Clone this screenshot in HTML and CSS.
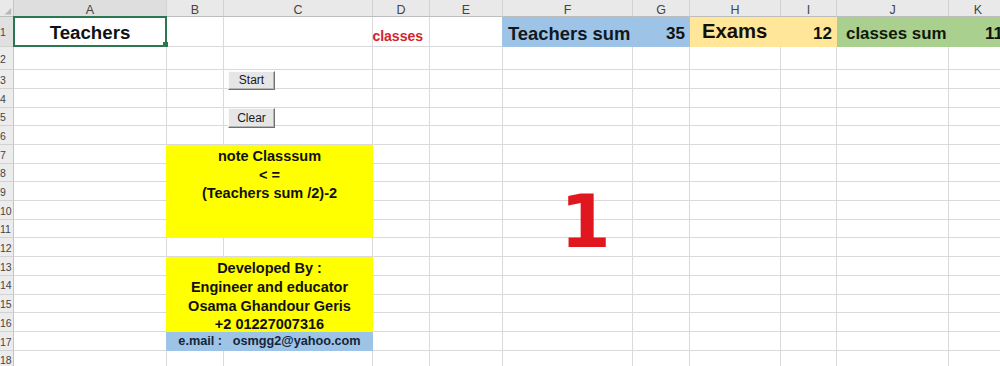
FILE: index.html
```html
<!DOCTYPE html>
<html>
<head>
<meta charset="utf-8">
<title>Teachers sheet</title>
<link rel="stylesheet" href="styles.css">
</head>
<body>
<div class="sheet">
  <div class="row">
    <div class="c corner"><svg class="corner-tri" width="14" height="17" viewBox="0 0 14 17"><polygon points="12,8 12,15 5,15" fill="#b8b8b8"/></svg></div>
    <div class="c ch ch-sel">A</div><div class="c ch">B</div><div class="c ch">C</div><div class="c ch">D</div><div class="c ch">E</div><div class="c ch">F</div><div class="c ch">G</div><div class="c ch">H</div><div class="c ch">I</div><div class="c ch">J</div><div class="c ch">K</div>
  </div>
  <div class="row r1">
    <div class="c rh rh-sel">1</div>
    <div class="c a1"><span class="title">Teachers</span><span class="selbox"></span><span class="handle"></span></div>
    <div class="c"></div><div class="c"></div>
    <div class="c d1"><span class="classes">classes</span></div>
    <div class="c e1"></div>
    <div class="c fill fill-blue"><span class="lbl">Teachers sum</span><span class="num">35</span></div>
    <div class="c fill fill-yellow"><span class="lbl lbl-exams">Exams</span><span class="num">12</span></div>
    <div class="c fill fill-green"><span class="lbl lbl-classes">classes sum</span><span class="num">11</span></div>
  </div>
  <div class="row"><div class="c rh">2</div><div class="c"></div><div class="c"></div><div class="c"></div><div class="c"></div><div class="c"></div><div class="c"></div><div class="c"></div><div class="c"></div><div class="c"></div><div class="c"></div><div class="c"></div></div>
  <div class="row"><div class="c rh">3</div><div class="c"></div><div class="c"></div><div class="c"></div><div class="c"></div><div class="c"></div><div class="c"></div><div class="c"></div><div class="c"></div><div class="c"></div><div class="c"></div><div class="c"></div></div>
  <div class="row"><div class="c rh">4</div><div class="c"></div><div class="c"></div><div class="c"></div><div class="c"></div><div class="c"></div><div class="c"></div><div class="c"></div><div class="c"></div><div class="c"></div><div class="c"></div><div class="c"></div></div>
  <div class="row"><div class="c rh">5</div><div class="c"></div><div class="c"></div><div class="c"></div><div class="c"></div><div class="c"></div><div class="c"></div><div class="c"></div><div class="c"></div><div class="c"></div><div class="c"></div><div class="c"></div></div>
  <div class="row"><div class="c rh">6</div><div class="c"></div><div class="c"></div><div class="c"></div><div class="c"></div><div class="c"></div><div class="c"></div><div class="c"></div><div class="c"></div><div class="c"></div><div class="c"></div><div class="c"></div></div>
  <div class="row">
    <div class="c rh">7</div><div class="c edge-yellow"></div>
    <div class="c note note-rule">
      <div class="ln">note Classsum</div>
      <div class="ln">&lt; =</div>
      <div class="ln">(Teachers sum /2)-2</div>
    </div>
    <div class="c"></div><div class="c"></div><div class="c"></div><div class="c"></div><div class="c"></div><div class="c"></div><div class="c"></div><div class="c"></div>
  </div>
  <div class="row"><div class="c rh">8</div><div class="c edge-yellow"></div><div class="c"></div><div class="c"></div><div class="c"></div><div class="c"></div><div class="c"></div><div class="c"></div><div class="c"></div><div class="c"></div></div>
  <div class="row"><div class="c rh">9</div><div class="c edge-yellow"></div><div class="c"></div><div class="c"></div><div class="c"></div><div class="c"></div><div class="c"></div><div class="c"></div><div class="c"></div><div class="c"></div></div>
  <div class="row"><div class="c rh">10</div><div class="c edge-yellow"></div><div class="c"></div><div class="c"></div><div class="c"></div><div class="c"></div><div class="c"></div><div class="c"></div><div class="c"></div><div class="c"></div></div>
  <div class="row"><div class="c rh">11</div><div class="c edge-yellow"></div><div class="c"></div><div class="c"></div><div class="c"></div><div class="c"></div><div class="c"></div><div class="c"></div><div class="c"></div><div class="c"></div></div>
  <div class="row">
    <div class="c rh">12</div><div class="c"></div><div class="c"></div><div class="c"></div><div class="c"></div><div class="c"></div>
    <div class="c big-cell"><span class="big-one">1</span></div>
    <div class="c"></div><div class="c"></div><div class="c"></div><div class="c"></div><div class="c"></div>
  </div>
  <div class="row">
    <div class="c rh">13</div><div class="c edge-yellow"></div>
    <div class="c note note-dev">
      <div class="ln">Developed By :</div>
      <div class="ln">Engineer and educator</div>
      <div class="ln">Osama Ghandour Geris</div>
      <div class="ln">+2 01227007316</div>
    </div>
    <div class="c"></div><div class="c"></div><div class="c"></div><div class="c"></div><div class="c"></div><div class="c"></div><div class="c"></div><div class="c"></div>
  </div>
  <div class="row"><div class="c rh">14</div><div class="c edge-yellow"></div><div class="c"></div><div class="c"></div><div class="c"></div><div class="c"></div><div class="c"></div><div class="c"></div><div class="c"></div><div class="c"></div></div>
  <div class="row"><div class="c rh">15</div><div class="c edge-yellow"></div><div class="c"></div><div class="c"></div><div class="c"></div><div class="c"></div><div class="c"></div><div class="c"></div><div class="c"></div><div class="c"></div></div>
  <div class="row"><div class="c rh">16</div><div class="c edge-yellow"></div><div class="c"></div><div class="c"></div><div class="c"></div><div class="c"></div><div class="c"></div><div class="c"></div><div class="c"></div><div class="c"></div></div>
  <div class="row">
    <div class="c rh">17</div><div class="c edge-blue"></div>
    <div class="c mail">e.mail :   osmgg2@yahoo.com</div>
    <div class="c"></div><div class="c"></div><div class="c"></div><div class="c"></div><div class="c"></div><div class="c"></div><div class="c"></div><div class="c"></div>
  </div>
  <div class="row"><div class="c rh">18</div><div class="c"></div><div class="c"></div><div class="c"></div><div class="c"></div><div class="c"></div><div class="c"></div><div class="c"></div><div class="c"></div><div class="c"></div><div class="c"></div><div class="c"></div></div>

  <button class="btn btn-start" type="button">Start</button>
  <button class="btn btn-clear" type="button">Clear</button>
</div>
</body>
</html>
```

FILE: styles.css
```css
html, body {
  margin: 0;
  padding: 0;
  background: #ffffff;
  overflow: hidden;
}

body {
  width: 1000px;
  height: 366px;
  font-family: "Liberation Sans", Arial, sans-serif;
  color: #111111;
}

.sheet {
  position: relative;
  display: grid;
  grid-template-columns: 14px 153px 57px 149px 57px 73px 130px 57px 91px 56px 112px 59px;
  grid-template-rows: 17.3px 29.4px 23.6px repeat(16, 18.7px);
}

.row {
  display: contents;
}

.c {
  box-sizing: border-box;
  min-width: 0;
  background: #ffffff;
  border-right: 1px solid #dadada;
  border-bottom: 1px solid #dadada;
  display: flex;
  align-items: flex-end;
  white-space: nowrap;
}

/* headers */
.corner {
  background: #e9e9e9;
  border-right-color: #c4c4c4;
  border-bottom-color: #bdbdbd;
  align-items: stretch;
}

.corner-tri {
  display: block;
}

.ch {
  background: #e9e9e9;
  border-right-color: #d2d2d2;
  border-bottom-color: #bdbdbd;
  justify-content: center;
  color: #444444;
  font-size: 12.5px;
  line-height: 1;
}

.ch-sel {
  background: #dedede;
}

.rh {
  background: #ececec;
  border-right-color: #c4c4c4;
  border-bottom-color: #d2d2d2;
  color: #444444;
  font-size: 10.5px;
  line-height: 1;
  align-items: center;
  padding-top: 2px;
}

.rh-sel {
  background: #e0e0e0;
}

/* row 1 */
.r1 .c {
  line-height: 1.15;
  padding-bottom: 2px;
}

.r1 .rh {
  padding-bottom: 0;
}

.a1 {
  position: relative;
  justify-content: center;
}

.title {
  font-size: 18.7px;
  font-weight: bold;
}

.selbox {
  position: absolute;
  left: -1px;
  top: -1px;
  right: -1px;
  bottom: -1px;
  border: 2px solid #2b7750;
  pointer-events: none;
}

.handle {
  position: absolute;
  right: -2px;
  bottom: -1px;
  width: 5px;
  height: 5px;
  background: #2b7750;
}

.d1 {
  justify-content: flex-end;
  padding-right: 6px;
}

.classes {
  color: #d3232b;
  font-size: 14px;
  font-weight: bold;
}

.e1 {
  border-right-color: #9dc3e6;
}

.fill {
  grid-column: span 2;
  justify-content: space-between;
  padding-right: 4px;
}

.fill-blue {
  background: #9dc3e6;
  border-color: #9dc3e6;
  padding-left: 5px;
}

.fill-yellow {
  background: #ffe699;
  border-color: #ffe699;
  padding-left: 12px;
}

.fill-green {
  background: #a9d08e;
  border-color: #a9d08e;
  padding-left: 9px;
}

.lbl {
  font-size: 18.4px;
  font-weight: bold;
  color: #101822;
}

.lbl-exams {
  font-size: 20.3px;
  color: #151008;
}

.lbl-classes {
  font-size: 16.9px;
  color: #10190a;
}

.num {
  font-size: 17px;
  font-weight: bold;
  color: #111111;
}

/* note boxes */
.edge-yellow {
  border-right-color: #ffff00;
}

.edge-blue {
  border-right-color: #9dc3e6;
}

.note {
  grid-column: span 2;
  display: block;
  background: #ffff00;
  border-color: #ffff00;
  text-align: center;
  font-size: 14.5px;
  font-weight: bold;
  line-height: 18.7px;
  padding-top: 2px;
  color: #111111;
}

.note-rule {
  grid-row: span 5;
}

.note-dev {
  grid-row: span 4;
}

.ln {
  height: 18.7px;
}

.mail {
  grid-column: span 2;
  background: #9dc3e6;
  border-color: #9dc3e6;
  justify-content: center;
  align-items: center;
  white-space: pre;
  font-size: 12.7px;
  font-weight: bold;
  color: #15263a;
}

/* big number */
.big-cell {
  padding-left: 57px;
}

.big-one {
  display: block;
  font-family: "DejaVu Sans", sans-serif;
  font-weight: bold;
  font-size: 73px;
  line-height: 1;
  color: #e0171f;
  margin-bottom: -2px;
}

/* floating form buttons */
.btn {
  position: absolute;
  left: 228px;
  width: 47px;
  height: 19.5px;
  box-sizing: border-box;
  margin: 0;
  padding: 0;
  background: #e6e6e6;
  border: 1px solid;
  border-color: #fafafa #707070 #707070 #fafafa;
  box-shadow: inset -1px -1px 0 #b4b4b4;
  font-family: "Liberation Sans", Arial, sans-serif;
  font-size: 12px;
  color: #1a1a1a;
  line-height: 1;
}

.btn-start {
  top: 70.5px;
}

.btn-clear {
  top: 108.3px;
}
```
